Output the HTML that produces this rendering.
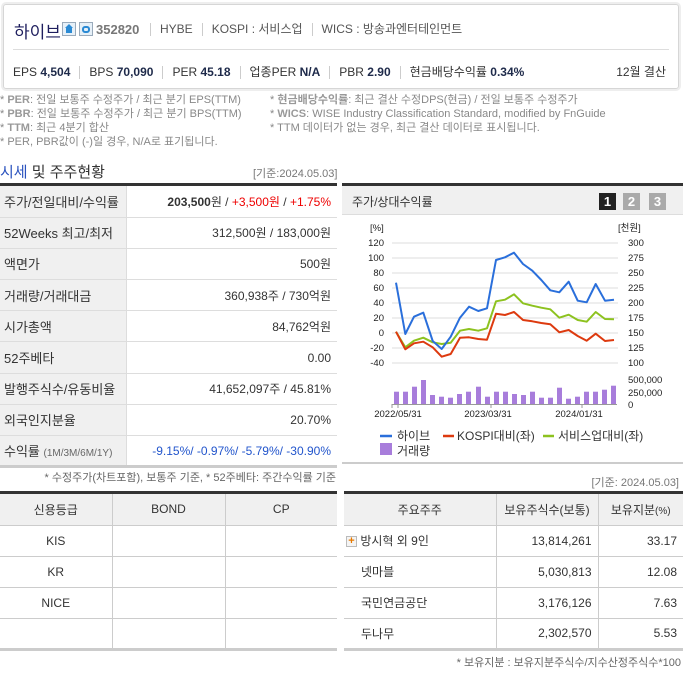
<!DOCTYPE html>
<html><head><meta charset="utf-8"><style>
*{margin:0;padding:0;box-sizing:border-box}
body{width:683px;height:679px;background:#fff;font-family:"Liberation Sans","Noto Sans CJK KR",sans-serif;color:#333;font-size:12px;position:relative;overflow:hidden}
.a{position:absolute;white-space:nowrap}
.hdr{position:absolute;left:3px;top:4px;width:676px;height:85px;border:1px solid #d6d6d6;border-radius:3px;box-shadow:0 0 0 2px #eee}
.sep{position:absolute;left:9px;top:49px;width:656px;border-top:1px solid #ddd}
.vb{display:inline-block;width:1px;height:13px;background:#ccc;vertical-align:middle;margin:0 9px}
.note{font-size:11px;color:#888;line-height:14px}
.note b{color:#999}
table{border-collapse:collapse;position:absolute}
.lt td{height:31.2px;border-bottom:1px solid #ddd;font-size:12px;padding:0 6px}
.lt td.l{background:#f0f0f0;border-right:1px solid #ddd;width:126px;padding-left:4px;font-size:13px}
.lt td.r{text-align:right}
.bt th{background:#f0f0f0;font-weight:normal;height:31px;border-right:1px solid #ccc;border-bottom:1px solid #ccc;font-size:12px}
.bt td{height:31px;border-right:1px solid #ccc;border-bottom:1px solid #ccc;font-size:12px}
.bt th:last-child,.bt td:last-child{border-right:none}
</style></head><body>
<div class="hdr"></div>
<div class="a" style="left:14px;top:18px;font-size:17px;color:#1e1e5e">하이브</div>
<div class="a" style="left:62px;top:22px;width:14px;height:14px;border:1px solid #9ab;background:#e6f0f8"><div style="position:absolute;left:3px;top:5px;width:6px;height:5px;background:#2a8ad4"></div><div style="position:absolute;left:2px;top:1px;width:0;height:0;border-left:4px solid transparent;border-right:4px solid transparent;border-bottom:4px solid #2a8ad4"></div></div>
<div class="a" style="left:79px;top:22px;width:14px;height:14px;border:1px solid #9ab;background:#e6f0f8"><div style="position:absolute;left:2px;top:3px;width:8px;height:7px;border:2px solid #2a8ad4;border-radius:3px"></div></div>
<div class="a" style="left:96px;top:22px;font-size:13px;font-weight:bold;color:#777">352820</div>
<div class="a" style="left:150px;top:20px;font-size:12px;color:#555"><span class="vb" style="margin-left:0"></span>HYBE<span class="vb"></span>KOSPI : 서비스업<span class="vb"></span>WICS : 방송과엔터테인먼트</div>
<div class="sep" style="left:13px"></div>
<div class="a" style="left:13px;top:63px;font-size:12px;color:#333">EPS <b style="color:#1e2a4a">4,504</b><span class="vb"></span>BPS <b style="color:#1e2a4a">70,090</b><span class="vb"></span>PER <b style="color:#1e2a4a">45.18</b><span class="vb"></span>업종PER <b style="color:#1e2a4a">N/A</b><span class="vb"></span>PBR <b style="color:#1e2a4a">2.90</b><span class="vb"></span>현금배당수익률 <b style="color:#1e2a4a">0.34%</b></div>
<div class="a" style="right:17px;top:63px;font-size:12px">12월 결산</div>

<div class="a note" style="left:0;top:93px">* <b>PER</b>: 전일 보통주 수정주가 / 최근 분기 EPS(TTM)<br>* <b>PBR</b>: 전일 보통주 수정주가 / 최근 분기 BPS(TTM)<br>* <b>TTM</b>: 최근 4분기 합산<br>* PER, PBR값이 (-)일 경우, N/A로 표기됩니다.</div>
<div class="a note" style="left:270px;top:93px">* <b>현금배당수익률</b>: 최근 결산 수정DPS(현금) / 전일 보통주 수정주가<br>* <b>WICS</b>: WISE Industry Classification Standard, modified by FnGuide<br>* TTM 데이터가 없는 경우, 최근 결산 데이터로 표시됩니다.</div>

<div class="a" style="left:0;top:161px;font-size:15px"><span style="color:#2a52be">시세</span> 및 주주현황</div>
<div class="a" style="left:253px;top:165px;font-size:11px;color:#777">[기준:2024.05.03]</div>

<div class="a" style="left:0;top:183px;width:337px;border-top:3px solid #333"></div>
<table class="lt" style="left:0;top:186px;width:337px">
<tr><td class="l">주가/전일대비/수익률</td><td class="r"><b>203,500</b>원 / <span style="color:#e00">+3,500원</span> / <span style="color:#e00">+1.75%</span></td></tr>
<tr><td class="l">52Weeks 최고/최저</td><td class="r">312,500원 / 183,000원</td></tr>
<tr><td class="l">액면가</td><td class="r">500원</td></tr>
<tr><td class="l">거래량/거래대금</td><td class="r">360,938주 / 730억원</td></tr>
<tr><td class="l">시가총액</td><td class="r">84,762억원</td></tr>
<tr><td class="l">52주베타</td><td class="r">0.00</td></tr>
<tr><td class="l">발행주식수/유동비율</td><td class="r">41,652,097주 / 45.81%</td></tr>
<tr><td class="l">외국인지분율</td><td class="r">20.70%</td></tr>
<tr><td class="l" style="border-bottom:3px solid #ccc">수익률 <span style="font-size:10px;color:#666">(1M/3M/6M/1Y)</span></td><td class="r" style="color:#2255cc;border-bottom:3px solid #ccc">-9.15%/ -0.97%/ -5.79%/ -30.90%</td></tr>
</table>
<div class="a" style="right:347px;top:469px;font-size:11px;color:#666">* 수정주가(차트포함), 보통주 기준, * 52주베타: 주간수익률 기준</div>

<div class="a" style="left:342px;top:183px;width:341px;height:32px;border-top:3px solid #333;background:#f0f0f0;border-bottom:1px solid #ddd"></div>
<div class="a" style="left:352px;top:193px;font-size:12px">주가/상대수익률</div>
<div class="a" style="left:599px;top:193px;width:17px;height:17px;background:#222;color:#fff;font-weight:bold;text-align:center;line-height:17px;font-size:13px">1</div>
<div class="a" style="left:623px;top:193px;width:17px;height:17px;background:#aaa;color:#fff;font-weight:bold;text-align:center;line-height:17px;font-size:13px">2</div>
<div class="a" style="left:649px;top:193px;width:17px;height:17px;background:#aaa;color:#fff;font-weight:bold;text-align:center;line-height:17px;font-size:13px">3</div>
<div class="a" style="left:342px;top:462px;width:341px;border-top:2px solid #ccc"></div>

<svg class="a" style="left:342px;top:215px" width="341" height="247" viewBox="342 215 341 247" font-family="Liberation Sans, sans-serif" font-size="9.5" fill="#222">
<g stroke="#ddd" stroke-width="1">
<line x1="392" y1="243" x2="618" y2="243"/><line x1="392" y1="258" x2="618" y2="258"/><line x1="392" y1="273" x2="618" y2="273"/><line x1="392" y1="288" x2="618" y2="288"/><line x1="392" y1="303" x2="618" y2="303"/><line x1="392" y1="318" x2="618" y2="318"/><line x1="392" y1="333" x2="618" y2="333"/><line x1="392" y1="348" x2="618" y2="348"/><line x1="392" y1="363" x2="618" y2="363"/>
</g>
<text x="370" y="231">[%]</text><text x="618" y="231">[천원]</text>
<g text-anchor="end"><text x="384" y="246">120</text><text x="384" y="261">100</text><text x="384" y="276">80</text><text x="384" y="291">60</text><text x="384" y="306">40</text><text x="384" y="321">20</text><text x="384" y="336">0</text><text x="384" y="351">-20</text><text x="384" y="366">-40</text></g>
<g><text x="628" y="246">300</text><text x="628" y="261">275</text><text x="628" y="276">250</text><text x="628" y="291">225</text><text x="628" y="306">200</text><text x="628" y="321">175</text><text x="628" y="336">150</text><text x="628" y="351">125</text><text x="628" y="366">100</text>
<text x="628" y="383">500,000</text><text x="628" y="396">250,000</text><text x="628" y="408">0</text></g>
<g fill="#a87ddb">
<rect x="394" y="391.7" width="5" height="12.3"/><rect x="403" y="391.7" width="5" height="12.3"/><rect x="412" y="386.7" width="5" height="17.3"/><rect x="421" y="380" width="5" height="24"/><rect x="430" y="395" width="5" height="9"/><rect x="439" y="396.7" width="5" height="7.3"/><rect x="448" y="397.7" width="5" height="6.3"/><rect x="457" y="394" width="5" height="10"/><rect x="466" y="391.7" width="5" height="12.3"/><rect x="476" y="386.7" width="5" height="17.3"/><rect x="485" y="396.7" width="5" height="7.3"/><rect x="494" y="391.7" width="5" height="12.3"/><rect x="503" y="391.7" width="5" height="12.3"/><rect x="512" y="394" width="5" height="10"/><rect x="521" y="395" width="5" height="9"/><rect x="530" y="391.7" width="5" height="12.3"/><rect x="539" y="397.7" width="5" height="6.3"/><rect x="548" y="397.7" width="5" height="6.3"/><rect x="557" y="387.7" width="5" height="16.3"/><rect x="566" y="398.7" width="5" height="5.3"/><rect x="575" y="396.7" width="5" height="7.3"/><rect x="584" y="391.7" width="5" height="12.3"/><rect x="593" y="391.7" width="5" height="12.3"/><rect x="602" y="389.7" width="5" height="14.3"/><rect x="611" y="385.7" width="5" height="18.3"/>
</g>
<line x1="392" y1="404.5" x2="617" y2="404.5" stroke="#999"/>
<g stroke="#999"><line x1="392" y1="404" x2="392" y2="408"/><line x1="398" y1="404" x2="398" y2="408"/><line x1="491" y1="404" x2="491" y2="408"/><line x1="582" y1="404" x2="582" y2="408"/></g>
<g text-anchor="middle" fill="#222"><text x="398" y="417">2022/05/31</text><text x="488" y="417">2023/03/31</text><text x="579" y="417">2024/01/31</text></g>
<g fill="none" stroke-width="2" stroke-linejoin="round">
<polyline stroke="#8dc21f" points="396,331.7 405.3,347.3 414,340.7 423.3,337.7 432.7,342.3 441.7,344 450.7,342.7 460,330.7 469,329 478.3,330.7 487,328.3 496,301.3 505,299.7 514,294.3 523,303.3 532.3,305.7 541.3,307.7 550.3,309.3 559.3,317.7 568.7,314.7 577.7,320 586.7,321.7 595.7,312 605,319 614,319.3"/>
<polyline stroke="#dd3a0f" points="396,331.7 405.3,349.3 414,343.3 423.3,341.7 432.7,347.3 441.7,356.7 450.7,354 460,337.7 469,337.3 478.3,339 487,339.7 496,313.7 505,315 514,312 523,320 532.3,321.3 541.3,323 550.3,324.3 559.3,332.3 568.7,330 577.7,336 586.7,340.7 595.7,333.7 605,341 614,340"/>
<polyline stroke="#2a6fdb" points="396,282.7 405.3,334 414,316.7 423.3,312.7 432.7,341 441.7,349 450.7,336.7 460,317.7 469,306.7 478.3,311 487,308.3 496,260 505,257.3 514,252.7 523,264 532.3,270.7 541.3,280 550.3,290.3 559.3,292.3 568.7,281.7 577.7,300.7 586.7,302.3 595.7,284 605,300.7 614,299.7"/>
</g>
<g font-size="12" fill="#333">
<line x1="380" y1="436" x2="392" y2="436" stroke="#2a6fdb" stroke-width="2.5"/><text x="397" y="440">하이브</text>
<line x1="443" y1="436" x2="454" y2="436" stroke="#dd3a0f" stroke-width="2.5"/><text x="457" y="440">KOSPI대비(좌)</text>
<line x1="543" y1="436" x2="554" y2="436" stroke="#8dc21f" stroke-width="2.5"/><text x="558" y="440">서비스업대비(좌)</text>
<rect x="380" y="443" width="12" height="12" fill="#a87ddb"/><text x="397" y="455">거래량</text>
</g>
</svg>

<div class="a" style="right:4px;top:474px;font-size:11px;color:#777">[기준: 2024.05.03]</div>
<div class="a" style="left:0;top:491px;width:337px;border-top:3px solid #333"></div>
<table class="bt" style="left:0;top:494px;width:337px;text-align:center">
<tr><th style="width:112px">신용등급</th><th style="width:113px">BOND</th><th>CP</th></tr>
<tr><td>KIS</td><td></td><td></td></tr>
<tr><td>KR</td><td></td><td></td></tr>
<tr><td>NICE</td><td></td><td></td></tr>
<tr><td style="border-bottom:3px solid #ccc"></td><td style="border-bottom:3px solid #ccc"></td><td style="border-bottom:3px solid #ccc"></td></tr>
</table>
<div class="a" style="left:344px;top:491px;width:339px;border-top:3px solid #333"></div>
<table class="bt" style="left:344px;top:494px;width:339px">
<tr><th style="width:152px">주요주주</th><th style="width:102px">보유주식수(보통)</th><th>보유지분<span style="font-size:10px">(%)</span></th></tr>
<tr><td style="padding-left:2px"><span style="display:inline-block;width:11px;height:11px;border:1px solid #bbb;background:#f4f4f4;color:#e87a00;font-size:11px;line-height:9px;text-align:center;font-weight:bold;vertical-align:middle">+</span> 방시혁 외 9인</td><td style="text-align:right;padding-right:6px">13,814,261</td><td style="text-align:right;padding-right:6px">33.17</td></tr>
<tr><td style="padding-left:17px">넷마블</td><td style="text-align:right;padding-right:6px">5,030,813</td><td style="text-align:right;padding-right:6px">12.08</td></tr>
<tr><td style="padding-left:17px">국민연금공단</td><td style="text-align:right;padding-right:6px">3,176,126</td><td style="text-align:right;padding-right:6px">7.63</td></tr>
<tr><td style="padding-left:17px;border-bottom:3px solid #ccc">두나무</td><td style="text-align:right;padding-right:6px;border-bottom:3px solid #ccc">2,302,570</td><td style="text-align:right;padding-right:6px;border-bottom:3px solid #ccc">5.53</td></tr>
</table>
<div class="a" style="right:2px;top:654px;font-size:11px;color:#666">* 보유지분 : 보유지분주식수/지수산정주식수*100</div>
</body></html>
